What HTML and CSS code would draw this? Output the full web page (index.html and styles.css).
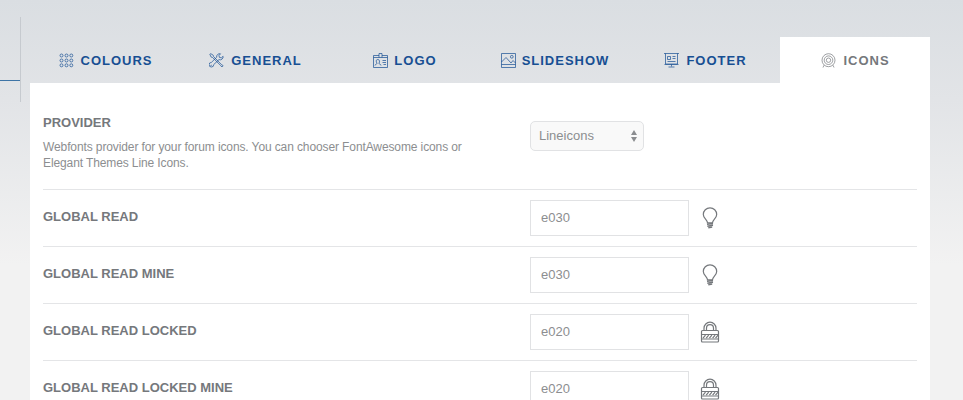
FILE: index.html
```
<!DOCTYPE html>
<html lang="en">
<head>
<meta charset="utf-8">
<title>Theme options</title>
<link rel="stylesheet" href="styles.css">
</head>
<body>
<svg width="0" height="0" class="sprite" aria-hidden="true">
  <symbol id="bulb" viewBox="0 0 20 24">
    <path d="M7.500 16.800c0-3-4.200-4.600-4.200-8.300a6.700 6.700 0 0 1 13.400 0c0 3.700-4.200 5.300-4.200 8.300z"/>
    <path d="M7 18.300l6-.8M7.300 20.200l5.700-1M8.300 21.800l3.900-.7" stroke-width="1.400"/>
  </symbol>
  <symbol id="lock" viewBox="0 0 20 24">
    <path d="M4 10.500V8.200a6 6 0 0 1 12 0v2.300M6.500 10.500V8.200a3.500 3.500 0 0 1 7 0v2.300"/>
    <rect x="1.500" y="10.500" width="17" height="11.500" rx="1"/>
    <path d="M1.500 14.500h17M1.500 19h17"/>
    <path d="M3 18.200l2.500-3M6.200 18.200l2.500-3M9.400 18.200l2.500-3M12.600 18.200l2.500-3M15.500 18.200l2.500-3" stroke-width="1.200"/>
  </symbol>
</svg>
<span class="timeline"></span>
<span class="connector"></span>
<main class="panel">
  <nav class="tabs">
    <a class="tab"><svg class="icon" viewBox="0 0 15 15"><g><circle cx="2.500" cy="2.500" r="1.500"/><circle cx="7.500" cy="2.500" r="1.500"/><circle cx="12.300" cy="2.500" r="1.500"/><circle cx="2.500" cy="7.500" r="1.500"/><circle cx="7.500" cy="7.500" r="1.500"/><circle cx="12.300" cy="7.500" r="1.500"/><circle cx="2.500" cy="12.300" r="1.500"/><circle cx="7.500" cy="12.300" r="1.500"/><circle cx="12.300" cy="12.300" r="1.500"/></g></svg>COLOURS</a>
    <a class="tab"><svg class="icon" viewBox="0 0 15 15"><path d="M.8 1.300l1-.6 2.400 1.500.4 1.400 7.700 7.800 1.800 1.300-1.200 1.300-1.500-1.700L3.600 4.500l-1.400-.4zM10 6.600l-5.300 5a2.300 2.300 0 1 1-2.300-2.200l5.300-5.200A3 3 0 0 1 11.500.8L10 2.400l.4 2 2 .4 1.700-1.500A3 3 0 0 1 10 6.600zM1.500 12.500l1.300-.3"/></svg>GENERAL</a>
    <a class="tab tight"><svg class="icon" viewBox="0 0 15 15"><path d="M6 2.500H.5v12h14v-12H9M6 .5h3v4H6zM.5 4.500H6M9 4.500h5.500M2 12.500c0-1.500 2-1 2-2.200C2.800 8.500 3 6.500 4.800 6.500S7 8.500 6 10.300c0 1.200 2 .7 2 2.200M9.500 7.500H13M9.500 9.500H13M10.500 11.500H13"/></svg>LOGO</a>
    <a class="tab tight"><svg class="icon" viewBox="0 0 15 15"><path d="M.5.500h14v14H.5zM.5 11.500h14M.5 9L5 4.500l5 5.500 2-2.500 2.500 2.500"/><circle cx="10.800" cy="3.800" r="1.400"/></svg>SLIDESHOW</a>
    <a class="tab"><svg class="icon" viewBox="0 0 15 15"><path d="M0 .5h15M1.500.5v10.500h12V.5M.5 11.500h14M3.500 3.500h3v3h-3zM8.500 3.500h3M8.500 5.500h3M3.500 8.500h8M7.500 11.500v2M4.500 14h6"/></svg>FOOTER</a>
    <a class="tab active"><svg class="icon" viewBox="0 0 15 15"><circle cx="7.500" cy="7.200" r="6.500"/><circle cx="7.500" cy="7.200" r="4.300"/><circle cx="7.500" cy="7.200" r="2.200"/><path d="M3 12.200l-1 2.300M12 12.200l1 2.300"/></svg>ICONS</a>
  </nav>
  <section class="options">
    <div class="row provider">
      <div class="label"><h3>PROVIDER</h3><p>Webfonts provider for your forum icons. You can chooser FontAwesome icons or<br>Elegant Themes Line Icons.</p></div>
      <div class="select">Lineicons<svg class="arrows" viewBox="0 0 6 12"><path d="M3 0l3 5H0zM3 12l3-5H0z"/></svg></div>
    </div>
    <div class="row"><div class="label"><h3>GLOBAL READ</h3></div><input class="code" value="e030"><svg class="glyph"><use href="#bulb"/></svg></div>
    <div class="row"><div class="label"><h3>GLOBAL READ MINE</h3></div><input class="code" value="e030"><svg class="glyph"><use href="#bulb"/></svg></div>
    <div class="row"><div class="label"><h3>GLOBAL READ LOCKED</h3></div><input class="code" value="e020"><svg class="glyph"><use href="#lock"/></svg></div>
    <div class="row"><div class="label"><h3>GLOBAL READ LOCKED MINE</h3></div><input class="code" value="e020"><svg class="glyph"><use href="#lock"/></svg></div>
  </section>
</main>
</body>
</html>
```
FILE: styles.css
```
* { box-sizing: border-box; }
html { height: 100%; overflow: hidden; }
body {
  height: 400px;
  margin: 0;
  padding: 37px 33px 0 30px;
  overflow: hidden;
  background: linear-gradient(#dadee2, #e2e4e7 100px, #f2f2f2 265px);
  font-family: "Liberation Sans", Arial, sans-serif;
  color: #75787c;
}
.sprite { position: absolute; }
.timeline {
  position: absolute;
  left: 20px;
  top: 17px;
  width: 1px;
  height: 85px;
  background: #c6cacf;
}
.connector {
  position: absolute;
  left: 0;
  top: 80px;
  width: 20px;
  height: 1px;
  background: #3d74a6;
}
.panel { width: 900px; }
.tabs { display: grid; grid-template-columns: repeat(6, 150px); height: 46px; }
.tab {
  display: flex;
  align-items: center;
  justify-content: center;
  padding-left: 1px;
  gap: 7px;
  font-size: 13px;
  font-weight: bold;
  letter-spacing: 1px;
  color: #174f93;
}
.tab.tight { padding-left: 0; gap: 6px; }
.tab.active { background: #fff; color: #75787c; }
.icon {
  width: 15px;
  height: 15px;
  fill: none;
  stroke: currentColor;
  stroke-width: .7;
  flex: none;
}
.options { background: #fff; padding: 0 13px; height: 320px; }
.row {
  display: flex;
  align-items: flex-start;
  height: 57px;
  padding-top: 10px;
  border-bottom: 1px solid #e4e5e7;
}
.row.provider { height: 107px; padding-top: 32px; }
.label { width: 487px; padding-top: 9px; }
.provider .label { padding-top: 0; }
h3 { margin: 0; font-size: 13px; line-height: 16px; font-weight: bold; }
p {
  margin: 8px 0 0;
  font-size: 12px;
  line-height: 16px;
  letter-spacing: -.11px;
  color: #8c8e90;
  white-space: nowrap;
}
.select {
  display: flex;
  align-items: center;
  justify-content: space-between;
  width: 114px;
  height: 30px;
  margin-top: 6px;
  padding: 0 6px 2px 8px;
  border: 1px solid #e1e2e4;
  border-radius: 5px;
  background: #f9f9f9;
  font-size: 13px;
  color: #8c8e90;
}
.arrows { width: 6px; height: 12px; margin-top: 2px; fill: #8b8d90; }
.code {
  width: 159px;
  height: 36px;
  padding: 0 10px 1px;
  border: 1px solid #e1e2e4;
  border-radius: 0;
  background: #fff;
  font: 13px "Liberation Sans", Arial, sans-serif;
  color: #8c8e90;
}
.glyph {
  width: 20px;
  height: 24px;
  margin: 6px 0 0 11px;
  fill: none;
  stroke: #75787c;
  stroke-width: 1.2;
}
```
